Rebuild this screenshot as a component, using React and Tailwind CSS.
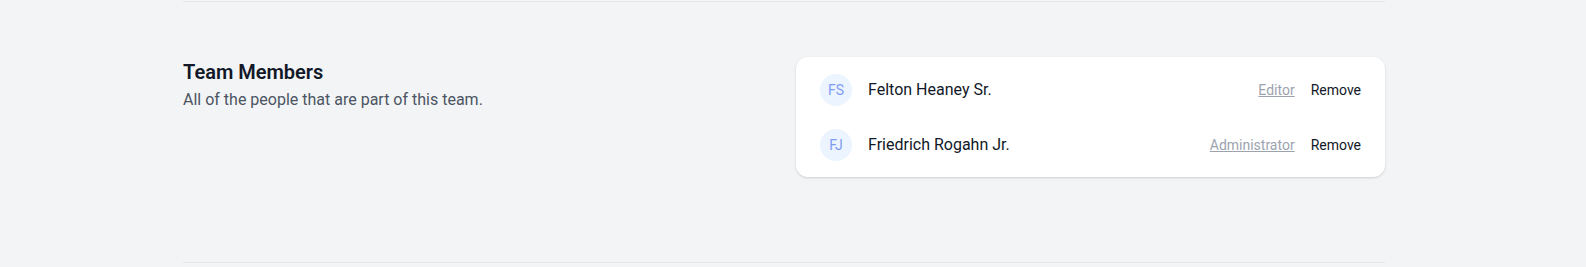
const members = [
  { initials: "FS", name: "Felton Heaney Sr.", role: "Editor" },
  { initials: "FJ", name: "Friedrich Rogahn Jr.", role: "Administrator" },
];

export default function App() {
  return (
    <div className="min-h-[267px] bg-[#f3f4f6] font-['Roboto',sans-serif]">
      <div className="ml-[183px] w-[1202px] pt-px">
        <div className="border-t border-[#e5e7eb]" />
        <div className="grid grid-cols-2 gap-6 pt-[55px] pb-[85px]">
          <div className="pt-px">
            <h3 className="text-[20px] leading-7 font-semibold text-[#111827]">Team Members</h3>
            <p className="mt-[2px] text-[16px] leading-6 text-[#4b5563]">
              All of the people that are part of this team.
            </p>
          </div>
          <div className="rounded-xl bg-white px-6 pt-[17px] pb-4 shadow-[0_1px_3px_rgba(0,0,0,0.1),0_1px_2px_rgba(0,0,0,0.06)]">
            <div className="flex flex-col gap-[23px]">
              {members.map((m) => (
                <div key={m.name} className="flex items-center justify-between">
                  <div className="flex items-center">
                    <div className="flex h-8 w-8 items-center justify-center rounded-full bg-[#ebf4ff] text-[14px] text-[#7f9cf5]">
                      {m.initials}
                    </div>
                    <div className="ml-4 text-[16px] text-[#111827]">{m.name}</div>
                  </div>
                  <div className="flex items-center">
                    <button className="text-[14px] text-[#9ca3af] underline">{m.role}</button>
                    <button className="ml-4 text-[14px] text-[#111827]">Remove</button>
                  </div>
                </div>
              ))}
            </div>
          </div>
        </div>
        <div className="border-t border-[#e5e7eb]" />
      </div>
    </div>
  );
}
